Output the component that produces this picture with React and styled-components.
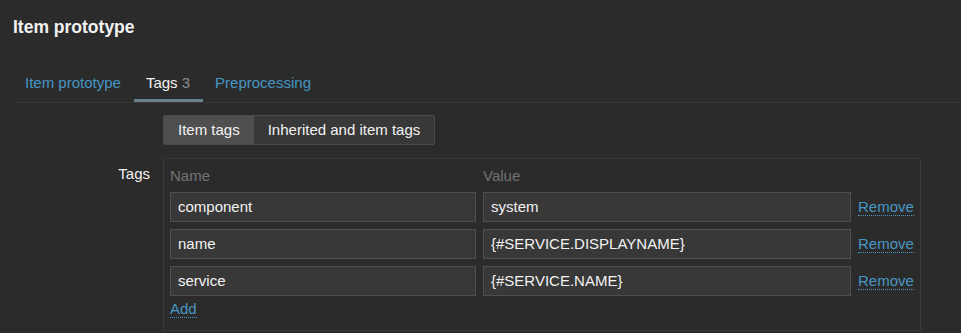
import styled, { createGlobalStyle } from "styled-components";

const GlobalStyle = createGlobalStyle`
  html, body {
    margin: 0;
    padding: 0;
    background: #2b2b2b;
  }
  body {
    font-family: "Liberation Sans", Arial, sans-serif;
    font-size: 15px;
    color: #f2f2f2;
  }
`;

const tags = [
  { name: "component", value: "system" },
  { name: "name", value: "{#SERVICE.DISPLAYNAME}" },
  { name: "service", value: "{#SERVICE.NAME}" },
];

function App() {
  return (
    <Page>
      <GlobalStyle />
      <Title>Item prototype</Title>
      <TabNav>
        <Tab>Item prototype</Tab>
        <Tab $active>
          Tags <Count>3</Count>
        </Tab>
        <Tab>Preprocessing</Tab>
      </TabNav>
      <Form>
        <Label />
        <Segmented>
          <Segment $checked>Item tags</Segment>
          <Segment>Inherited and item tags</Segment>
        </Segmented>
        <Label>Tags</Label>
        <TagTable>
          <HeadCell>Name</HeadCell>
          <HeadCell>Value</HeadCell>
          <HeadCell />
          {tags.map((tag) => (
            <Row key={tag.name}>
              <Input>{tag.name}</Input>
              <Input>{tag.value}</Input>
              <LinkCell>
                <Link href="#">Remove</Link>
              </LinkCell>
            </Row>
          ))}
          <AddCell>
            <Link href="#">Add</Link>
          </AddCell>
        </TagTable>
      </Form>
    </Page>
  );
}

const Page = styled.div`
  padding-left: 13px;
  padding-bottom: 3px;
`;

const Title = styled.h1`
  margin: 0;
  padding-top: 17px;
  font-size: 17.5px;
  line-height: 20px;
  font-weight: bold;
  color: #f2f2f2;
`;

const TabNav = styled.div`
  display: flex;
  margin-top: 29px;
  border-bottom: 1px solid #383838;
`;

const Tab = styled.div`
  padding: 8px 13px 7px 12px;
  line-height: 18px;
  border-bottom: 3px solid ${(p) => (p.$active ? "#6a808c" : "transparent")};
  color: ${(p) => (p.$active ? "#f2f2f2" : "#4796c4")};
  white-space: nowrap;
`;

const Count = styled.span`
  color: #8c8c8c;
`;

const Form = styled.div`
  display: grid;
  grid-template-columns: 137px max-content;
  column-gap: 13px;
  row-gap: 13px;
  margin-top: 12px;
`;

const Label = styled.div`
  text-align: right;
  padding-top: 7px;
  line-height: 18px;
`;

const Segmented = styled.div`
  display: flex;
  justify-self: start;
  height: 28px;
  border: 1px solid #4a4a4a;
  border-radius: 2px;
  background: #383838;
  overflow: hidden;
`;

const Segment = styled.div`
  padding: 0 14px;
  line-height: 28px;
  background: ${(p) => (p.$checked ? "#4f4f4f" : "transparent")};
  white-space: nowrap;
`;

const TagTable = styled.div`
  display: grid;
  grid-template-columns: 306px 368px max-content;
  column-gap: 7px;
  row-gap: 7px;
  padding: 8px 6px 12px;
  border: 1px solid #383838;
`;

const HeadCell = styled.div`
  line-height: 18px;
  color: #737373;
`;

const Row = styled.div`
  display: contents;
`;

const Input = styled.div`
  box-sizing: border-box;
  height: 30px;
  padding: 0 7px;
  line-height: 28px;
  background: #383838;
  border: 1px solid #4f4f4f;
  white-space: nowrap;
  overflow: hidden;
`;

const LinkCell = styled.div`
  line-height: 30px;
`;

const AddCell = styled.div`
  grid-column: 1 / -1;
  margin-top: -3px;
  line-height: 18px;
`;

const Link = styled.a`
  color: #4796c4;
  text-decoration: none;
  border-bottom: 1px dotted #4796c4;
`;

export default App;
